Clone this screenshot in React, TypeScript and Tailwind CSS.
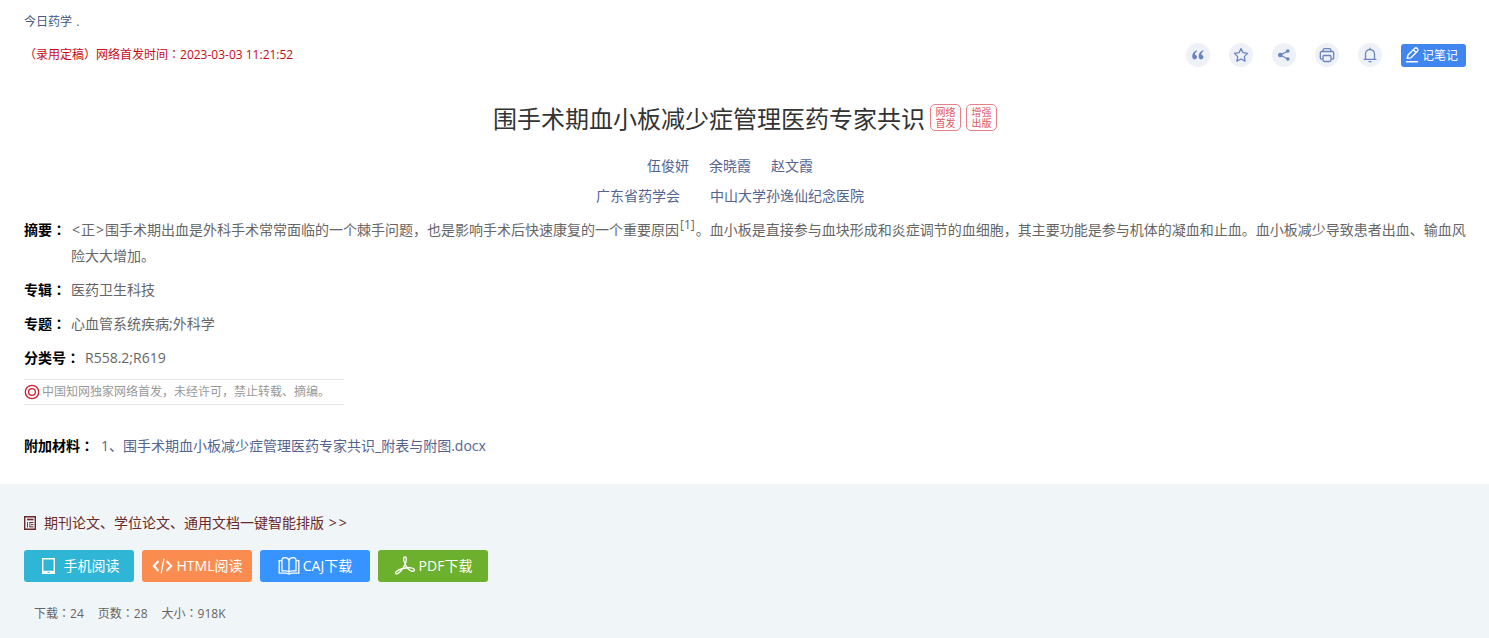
import type { ReactNode } from "react";

// The Japanese form of the full-width colon sits in the middle of its cell.
const Colon = () => (
  <span lang="ja" className="font-['Noto_Sans_CJK_JP',sans-serif] leading-none">
    ：
  </span>
);

const Angle = ({ children }: { children: string }) => <span className="px-px">{children}</span>;

function Label({ children }: { children: ReactNode }) {
  return (
    <dt className="shrink-0 pr-[5px] font-bold text-black">
      {children}
      <Colon />
    </dt>
  );
}

function Row({ label, children }: { label: string; children: ReactNode }) {
  return (
    <div className="flex">
      <Label>{label}</Label>
      <dd className="min-w-0">{children}</dd>
    </div>
  );
}

function ToolButton({ label, children }: { label: string; children: ReactNode }) {
  return (
    <button
      type="button"
      aria-label={label}
      className="flex size-6 items-center justify-center rounded-full bg-[#eff1f9] text-[#6b84be]"
    >
      <svg
        viewBox="0 0 16 16"
        className="size-4"
        fill="none"
        stroke="currentColor"
        strokeWidth="1.3"
        strokeLinecap="round"
        strokeLinejoin="round"
      >
        {children}
      </svg>
    </button>
  );
}

function Badge({ top, bottom }: { top: string; bottom: string }) {
  return (
    <span className="mt-px flex w-[31px] flex-col rounded-[5px] border border-[#e88088] pt-[2px] pb-px text-center text-[10px] leading-[11px] text-[#e0555f]">
      <span>{top}</span>
      <span>{bottom}</span>
    </span>
  );
}

function Icon({ children }: { children: ReactNode }) {
  return (
    <svg
      viewBox="0 0 22 20"
      className="h-5 w-[22px] shrink-0"
      fill="none"
      stroke="currentColor"
      strokeWidth="1.5"
      aria-hidden="true"
    >
      {children}
    </svg>
  );
}

const actionClass =
  "flex h-8 w-[110px] items-center justify-center gap-[3px] rounded-[3px] text-[14px] whitespace-nowrap text-white";

export default function App() {
  return (
    <main
      lang="zh-CN"
      className="font-['Open_Sans','Noto_Sans_CJK_SC',sans-serif] text-[14px] leading-[26px] text-[#666]"
    >
      <section className="bg-white pt-3 pr-[23px] pb-[25px] pl-6">
        <header className="flex items-end justify-between">
          <div className="text-[12px]">
            <p className="leading-5">
              <a href="#journal" className="text-[#43597f]">今日药学</a>
              <span className="pl-px"> .</span>
            </p>
            <p className="mt-[10px] leading-[25px] text-[#c60a17]">
              （录用定稿）网络首发时间
              <Colon />
              2023-03-03 11:21:52
            </p>
          </div>
          <div className="flex items-center gap-[19px]">
            <ToolButton label="引用">
              <path
                d="M7 3.2C4.1 4 2.2 6.3 2.2 9.2c0 2 1 3.2 2.5 3.2 1.3 0 2.3-1 2.3-2.3S6.100 7.900 4.900 7.800C5 6.200 5.700 4.900 7.200 3.900zM13.400 3.200C10.500 4 8.600 6.300 8.600 9.200c0 2 1 3.200 2.500 3.200 1.300 0 2.300-1 2.300-2.300S12.500 7.900 11.300 7.800c.1-1.600.8-2.900 2.300-3.900z"
                fill="currentColor"
                stroke="none"
              />
            </ToolButton>
            <ToolButton label="收藏">
              <path d="M8 1.600 10 5.700 14.600 6.400 11.300 9.600 12.100 14.100 8 12 3.900 14.100 4.700 9.600 1.400 6.400 6 5.700z" />
            </ToolButton>
            <ToolButton label="分享">
              <path d="M11.800 4.200 4.200 8l7.600 4" />
              <g fill="currentColor" stroke="none">
                <circle cx="11.800" cy="4" r="1.800" />
                <circle cx="4.300" cy="8" r="2.300" />
                <circle cx="11.800" cy="12" r="1.800" />
              </g>
            </ToolButton>
            <ToolButton label="打印">
              <path d="M4 4.500V3.200A1.500 1.500 0 0 1 5.500 1.700h5A1.500 1.500 0 0 1 12 3.200v1.300M4 12.200H2.800a1.500 1.500 0 0 1-1.500-1.500V6a1.500 1.500 0 0 1 1.500-1.500h10.400A1.500 1.500 0 0 1 14.700 6v4.700a1.500 1.500 0 0 1-1.500 1.500H12M5 8.500h6a1 1 0 0 1 1 1v3.500a1.500 1.500 0 0 1-1.500 1.500h-5A1.500 1.500 0 0 1 4 13V9.500a1 1 0 0 1 1-1z" />
            </ToolButton>
            <ToolButton label="订阅">
              <path d="M2 12.300h12M3.500 12.300V7a4.500 4.500 0 0 1 9 0v5.300M8 1.200v1.200M7 14.600h2" />
            </ToolButton>
            <button
              type="button"
              className="flex h-[23px] items-center gap-px rounded-[3px] bg-[#3f86f0] pr-2 pl-1 text-[12px] leading-[23px] text-white"
            >
              <svg
                viewBox="0 0 16 18"
                className="h-[18px] w-4"
                fill="none"
                stroke="currentColor"
                strokeWidth="1.400"
                strokeLinecap="round"
                strokeLinejoin="round"
                aria-hidden="true"
              >
                <path d="M2.200 12.300 3 9.100l6.600-6.700a2 2 0 0 1 2.800 0 2 2 0 0 1 0 2.800l-6.700 6.700zM8.300 3.800l2.700 2.700M1.500 15.700h11" />
              </svg>
              记笔记
            </button>
          </div>
        </header>

        <div className="mt-9 flex items-start justify-center gap-[5px]">
          <h1 className="text-[24px] leading-8 text-[#333]">围手术期血小板减少症管理医药专家共识</h1>
          <Badge top="网络" bottom="首发" />
          <Badge top="增强" bottom="出版" />
        </div>

        <div className="mt-4 pr-[30px] leading-[30px] text-[#54648f]">
          <div className="flex justify-center gap-5">
            <a href="#author-1">伍俊妍</a>
            <a href="#author-2">余晓霞</a>
            <a href="#author-3">赵文霞</a>
          </div>
          <div className="flex justify-center gap-[30px]">
            <a href="#org-1">广东省药学会</a>
            <a href="#org-2">中山大学孙逸仙纪念医院</a>
          </div>
        </div>

        <dl className="mt-[6px] flex flex-col gap-2">
          <Row label="摘要">
            <Angle>&lt;</Angle>正<Angle>&gt;</Angle>
            围手术期出血是外科手术常常面临的一个棘手问题，也是影响手术后快速康复的一个重要原因
            <sup className="px-px text-[12px]">[1]</sup>
            。血小板是直接参与血块形成和炎症调节的血细胞，其主要功能是参与机体的凝血和止血。血小板减少导致患者出血、输血风险大大增加。
          </Row>
          <Row label="专辑">医药卫生科技</Row>
          <Row label="专题">心血管系统疾病;外科学</Row>
          <Row label="分类号">R558.2;R619</Row>
        </dl>

        <p className="mt-2 flex w-80 items-center gap-[2px] border-y border-[#e6e6e6] text-[12px] leading-6 text-[#999]">
          <svg viewBox="0 0 16 16" className="size-4" fill="none" stroke="#c8202f" strokeWidth="1.300" aria-hidden="true">
            <circle cx="8" cy="8" r="6.700" />
            <circle cx="8" cy="8" r="3.400" />
          </svg>
          中国知网独家网络首发，未经许可，禁止转载、摘编。
        </p>

        <dl className="mt-7 flex">
          <Label>附加材料</Label>
          <dd className="pl-[2px]">
            <a href="#attachment" className="text-[#54648f]">
              1、围手术期血小板减少症管理医药专家共识_附表与附图.docx
            </a>
          </dd>
        </dl>
      </section>

      <section className="bg-[#f0f5f8] px-6 pt-[26px] pb-[14px]">
        <a href="#typesetting" className="flex items-center gap-2 text-[#6b2a2a]">
          <svg viewBox="0 0 12 14" className="h-[14px] w-3" fill="none" stroke="currentColor" aria-hidden="true">
            <path d="M.7.700h10.600v12.600H.700z" strokeWidth="1.400" />
            <path d="M3 3.500h6.500" strokeWidth="1.600" />
            <path d="M5.500 6.500h4M7 8.700h2.500M5.500 10.900h4" strokeWidth="1" />
            <path d="M3.500 6v5.500M5.900 6.500v4.500" strokeWidth=".9" />
          </svg>
          <span>
            期刊论文、学位论文、通用文档一键智能排版 <Angle>&gt;</Angle>
            <Angle>&gt;</Angle>
          </span>
        </a>

        <nav className="mt-[14px] flex gap-2">
          <a href="#mobile" className={`${actionClass} bg-[#2fb5d6]`}>
            <Icon>
              <path d="M3.700 2.700h11.600v14.600H3.700z" strokeWidth="1.400" />
              <path d="M3 14.800h13V18H3z" fill="currentColor" stroke="none" />
              <path d="M8.500 16.400h2" stroke="#2fb5d6" strokeWidth="1" />
            </Icon>
            手机阅读
          </a>
          <a href="#html" className={`${actionClass} bg-[#fa8c50]`}>
            <Icon>
              <path d="M6.500 5 1.800 10l4.700 5M14.500 5l4.700 5-4.700 5" strokeWidth="2" />
              <path d="M12 2.500 9.200 17.500" strokeWidth="1.300" />
            </Icon>
            HTML阅读
          </a>
          <a href="#caj" className={`${actionClass} bg-[#3793ff]`}>
            <Icon>
              <path
                d="M11 4.500C10.500 2.500 9 1.700 7 1.700S4 2.600 4 4v10.800h3.500c1.900 0 3 .5 3.500 1.400.5-.9 1.600-1.400 3.500-1.400H18V4c0-1.400-1-2.300-3-2.300s-3.500.8-4 2.800zv11.700M4 4.700H1.200v12.500H8c1.200 0 2 .8 3 .8s1.800-.8 3-.8h6.800V4.700H18"
                strokeWidth="1.300"
              />
            </Icon>
            CAJ下载
          </a>
          <a href="#pdf" className={`${actionClass} bg-[#6cb02d]`}>
            <Icon>
              <path
                d="M10.800 7.200C9 3.800 9.500 1 11 1s1.900 2.600.5 6.200C10 11 7 15.500 4 17.400c-2 1.200-3.300-.4-1.700-1.900 3-2.500 9.500-4.300 14.700-3.600 2.700.4 4 1.600 3.300 2.700-.9 1.300-3.900.6-6-1.500-1.400-1.500-2.600-3.600-3.500-5.900z"
                strokeWidth="1.300"
                strokeLinejoin="round"
              />
            </Icon>
            PDF下载
          </a>
        </nav>

        <ul className="mt-[22px] flex gap-[14px] pl-[10px] text-[12px] leading-5">
          <li>下载<Colon />24</li>
          <li>页数<Colon />28</li>
          <li>大小<Colon />918K</li>
        </ul>
      </section>
    </main>
  );
}
